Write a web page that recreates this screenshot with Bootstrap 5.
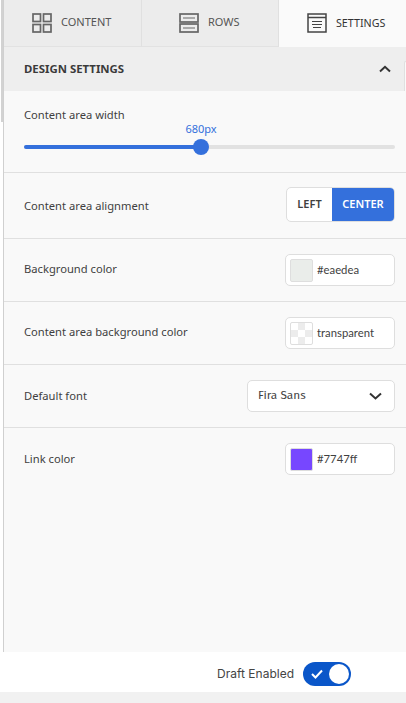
<!DOCTYPE html>
<html lang="en">
<head>
<meta charset="utf-8">
<title>Design settings</title>
<link rel="stylesheet" href="https://cdn.jsdelivr.net/npm/bootstrap@5.3.0/dist/css/bootstrap.min.css">
<style>
html,body{height:703px;overflow:hidden;background:#fff}
body{font-family:"Noto Sans","Open Sans",sans-serif;color:#3f3f3f;font-size:11.2px}
.shell{height:703px;position:relative}
.side-strip{position:absolute;left:1px;top:0;width:2px;height:122px;background:#d2d2d2}
.edge-tab{position:absolute;right:0;top:61px;width:2px;height:30px;background:#fafafa;border:1px solid #e0e0e0;border-width:1px 0 0 1px;border-top-left-radius:3px}
.panel-area{height:652px;border-left:1px solid #d0d0d0;margin-left:3px;background:#f9f9f9}
.tabbar{height:47px;background:#fff}
.tab-item{height:47px;background:#ececec;border-bottom:1px solid #e2e2e2;border-right:1px solid #e0e0e0;color:#555;font-size:11px;padding-left:28px;padding-bottom:1px;gap:9px;width:138px}
.tab-item.second{width:137px;padding-left:37px}
.tab-item.active-tab{flex:1;background:#fafafa;border:0;color:#333;padding-left:28px;gap:9px;font-size:10.700px}
.sec-head{height:44px;background:#eeeeee;padding:0 15px 0 20px;font-size:11.400px;font-weight:700;color:#3a3a3a}
.set-row{border-bottom:1px solid #e0e0e0;padding:0 11px 0 20px}
.row-slider{height:82px;padding-top:16px}
.row-align{height:66px}
.row-plain{height:63px}
.row-last{height:62px;border:0}
.row-text-up{padding-bottom:1px}
.row-text-down{padding-top:1px}
.slider-val{color:#3470dc;text-align:center;font-size:11px;line-height:14px;margin-top:-2px;margin-left:-17px}
.track{height:4px;border-radius:2px;background:#e2e2e2;margin-top:9px}
.track-fill{height:4px;width:177px;border-radius:2px 0 0 2px;background:#3470dc}
.track-knob{width:16px;height:16px;border-radius:50%;background:#3470dc;margin-top:-10px;margin-left:169px;position:relative}
.seg-wrap{width:109px;height:35px;margin-bottom:2px;border:1px solid #dedede;border-radius:5px;overflow:hidden;background:#fff;font-size:11px;font-weight:600}
.seg-left{width:45px;color:#3f3f3f}
.seg-right{flex:1;background:#3470dc;color:#fff}
.color-box{width:110px;height:32px;background:#fff;border:1px solid #dedede;border-radius:5px;padding-left:4px;gap:4px;font-family:"Lato","Noto Sans",sans-serif;font-size:11.300px;color:#3f3f3f}
.swatch{width:23px;height:23px;border:1px solid #dedede;border-radius:2px;background:#eaedea;flex:none}
.swatch-check{background:#fff;background-image:linear-gradient(45deg,#ececec 25%,transparent 25%,transparent 75%,#ececec 75%),linear-gradient(45deg,#ececec 25%,transparent 25%,transparent 75%,#ececec 75%);background-size:14px 14px;background-position:0 0,7px 7px}
.swatch-violet{background:#7747ff;border-color:#ddd}
.font-box{width:148px;height:32px;background:#fff;border:1px solid #dedede;border-radius:5px;padding:0 12px 0 10px;font-family:"Fira Sans","Noto Sans",sans-serif;font-size:11.800px}
.foot-bar{height:40px;padding-top:3px;background:#fff;padding-right:55px;font-family:"Inter","Liberation Sans",sans-serif;font-size:12px;color:#444;gap:9px}
.sw-pill{width:48px;height:24px;background:#0a56c9;border-radius:12px;padding:0 2px 0 8px}
.sw-knob{width:20px;height:20px;background:#fff;border-radius:50%}
.foot-strip{height:11px;background:#f1f1f1}
</style>
</head>
<body>
<div class="shell d-flex flex-column">
  <div class="side-strip"></div>
  <div class="edge-tab"></div>
  <div class="panel-area flex-shrink-0">
    <div class="tabbar d-flex">
      <div class="tab-item d-flex align-items-center">
        <svg width="20" height="20" viewBox="0 0 20 20" fill="none" stroke="#666" stroke-width="1.700"><rect x="1" y="1" width="7.500" height="7.500"/><rect x="11.500" y="1" width="7.500" height="7.500"/><rect x="1" y="11.500" width="7.500" height="7.500"/><rect x="11.500" y="11.500" width="7.500" height="7.500"/></svg>
        <span>CONTENT</span>
      </div>
      <div class="tab-item second d-flex align-items-center">
        <svg width="20" height="20" viewBox="0 0 20 20" fill="none" stroke="#666" stroke-width="1.700"><rect x="1" y="1" width="18" height="8"/><rect x="1" y="11" width="18" height="8"/><path d="M4 5h12M4 15h12" stroke-width="1"/></svg>
        <span>ROWS</span>
      </div>
      <div class="tab-item active-tab d-flex align-items-center">
        <svg width="20" height="20" viewBox="0 0 20 20" fill="none" stroke="#444" stroke-width="1.500"><rect x="1" y="1" width="18" height="18"/><path d="M1 4.500h18" /><path d="M5 8.500h10M5 11.500h10M6 14.500h8" stroke-width="1"/></svg>
        <span>SETTINGS</span>
      </div>
    </div>
    <div class="sec-head d-flex align-items-center justify-content-between">
      <span>DESIGN SETTINGS</span>
      <svg width="12" height="8" viewBox="0 0 12 8" fill="none" stroke="#333" stroke-width="2"><path d="M1 6.500 6 1.800l5 4.700"/></svg>
    </div>
    <div class="set-row row-slider">
      <div>Content area width</div>
      <div class="slider-val">680px</div>
      <div class="track"><div class="track-fill"></div></div>
      <div class="track-knob"></div>
    </div>
    <div class="set-row row-align d-flex align-items-center justify-content-between">
      <span class="row-text-down">Content area alignment</span>
      <div class="seg-wrap d-flex">
        <div class="seg-left d-flex align-items-center justify-content-center">LEFT</div>
        <div class="seg-right d-flex align-items-center justify-content-center">CENTER</div>
      </div>
    </div>
    <div class="set-row row-plain d-flex align-items-center justify-content-between">
      <span class="row-text-up">Background color</span>
      <div class="color-box d-flex align-items-center"><span class="swatch"></span><span>#eaedea</span></div>
    </div>
    <div class="set-row row-plain d-flex align-items-center justify-content-between">
      <span class="row-text-up">Content area background color</span>
      <div class="color-box d-flex align-items-center"><span class="swatch swatch-check"></span><span>transparent</span></div>
    </div>
    <div class="set-row row-plain d-flex align-items-center justify-content-between">
      <span>Default font</span>
      <div class="font-box d-flex align-items-center justify-content-between">
        <span>Fira Sans</span>
        <svg width="13" height="8" viewBox="0 0 13 8" fill="none" stroke="#333" stroke-width="2"><path d="M1 1.500 6.500 6.500l5.500-5"/></svg>
      </div>
    </div>
    <div class="set-row row-last d-flex align-items-center justify-content-between">
      <span>Link color</span>
      <div class="color-box d-flex align-items-center"><span class="swatch swatch-violet"></span><span>#7747ff</span></div>
    </div>
  </div>
  <div class="foot-bar d-flex align-items-center justify-content-end flex-shrink-0">
    <span>Draft Enabled</span>
    <div class="sw-pill d-flex align-items-center justify-content-between">
      <svg width="12" height="10" viewBox="0 0 12 10" fill="none" stroke="#fff" stroke-width="2"><path d="M1 5l3.500 3.500L11 1.500"/></svg>
      <span class="sw-knob"></span>
    </div>
  </div>
  <div class="foot-strip flex-shrink-0"></div>
</div>
</body>
</html>
